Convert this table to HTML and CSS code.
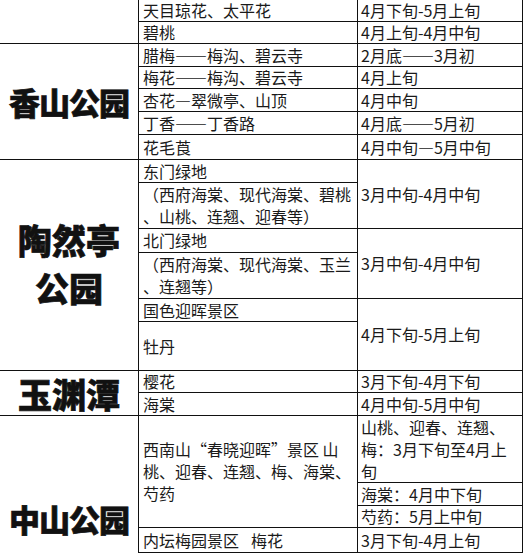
FILE: index.html
```html
<!DOCTYPE html>
<html lang="zh-CN">
<head>
<meta charset="utf-8">
<title>花期表</title>
<link rel="stylesheet" href="styles.css">
</head>
<body>
<div class="sheet">
  <div class="park span2"></div>
  <div class="cell">天目琼花、太平花</div>
  <div class="cell date">4月下旬-5月上旬</div>
  <div class="cell">碧桃</div>
  <div class="cell date">4月上旬-4月中旬</div>

  <div class="park span5 xs">香山公园</div>
  <div class="cell">腊梅——梅沟、碧云寺</div>
  <div class="cell date">2月底——3月初</div>
  <div class="cell">梅花——梅沟、碧云寺</div>
  <div class="cell date">4月上旬</div>
  <div class="cell">杏花—翠微亭、山顶</div>
  <div class="cell date">4月中旬</div>
  <div class="cell">丁香——丁香路</div>
  <div class="cell date">4月底——5月初</div>
  <div class="cell">花毛莨</div>
  <div class="cell date">4月中旬—5月中旬</div>

  <div class="park span6 tr">陶然亭<br>公园</div>
  <div class="cell">东门绿地</div>
  <div class="cell date span2">3月中旬-4月中旬</div>
  <div class="cell multi">（西府海棠、现代海棠、碧桃<br>、山桃、连翘、迎春等）</div>
  <div class="cell">北门绿地</div>
  <div class="cell date span2">3月中旬-4月中旬</div>
  <div class="cell multi">（西府海棠、现代海棠、玉兰<br>、连翘等）</div>
  <div class="cell">国色迎晖景区</div>
  <div class="cell date span2">4月下旬-5月上旬</div>
  <div class="cell">牡丹</div>

  <div class="park span2 yy">玉渊潭</div>
  <div class="cell">樱花</div>
  <div class="cell date">3月下旬-4月下旬</div>
  <div class="cell">海棠</div>
  <div class="cell date">4月中旬-5月中旬</div>

  <div class="park span4 zs last">中山公园</div>
  <div class="cell multi span3">西南山“春晓迎晖”景区 山<br>桃、迎春、连翘、梅、海棠、<br>芍药</div>
  <div class="cell date multi">山桃、迎春、连翘、<br>梅：3月下旬至4月上<br>旬</div>
  <div class="cell date">海棠：4月中下旬</div>
  <div class="cell date">芍药：5月上中旬</div>
  <div class="cell">内坛梅园景区<span class="gap"></span>梅花</div>
  <div class="cell date">3月下旬-4月上旬</div>
</div>
</body>
</html>
```
FILE: styles.css
```css
html, body {
  margin: 0;
  padding: 0;
  background: #ffffff;
}

body {
  width: 525px;
  height: 554px;
  overflow: hidden;
  font-family: "Noto Sans CJK SC", "Noto Sans", sans-serif;
  color: #1a1a1a;
  text-spacing-trim: space-all;
}

.sheet {
  display: grid;
  grid-template-columns: 139px 219px 165px;
  grid-template-rows: 22px 22px 23px 22px 23px 23px 25px 23px 46px 24px 46px 23px 49px 22px 23px 67px 23px 22px 25px;
}

.cell {
  box-sizing: border-box;
  display: flex;
  align-items: center;
  padding: 0 3px 1px 4px;
  font-size: 16px;
  line-height: 22px;
  white-space: nowrap;
  text-spacing-trim: space-all;
  border-right: 1px solid #111;
  border-bottom: 1px solid #111;
}

.cell.date {
  padding-left: 3px;
}

.gap {
  display: inline-block;
  width: 12px;
}

.park {
  box-sizing: border-box;
  display: flex;
  align-items: center;
  justify-content: center;
  text-align: center;
  font-weight: 900;
  color: #111;
  -webkit-text-stroke: 0.7px #111;
  border-right: 1px solid #111;
  border-bottom: 1px solid #111;
}

.park.last {
  border-bottom: none;
}

.span2 { grid-row: span 2; }
.span3 { grid-row: span 3; }
.span4 { grid-row: span 4; }
.span5 { grid-row: span 5; }
.span6 { grid-row: span 6; }

.xs {
  font-size: 31px;
  letter-spacing: -1px;
}

.tr {
  font-size: 34px;
  line-height: 48px;
  padding-bottom: 2px;
}

.yy {
  font-size: 34px;
  padding-top: 1px;
}

.zs {
  font-size: 31px;
  letter-spacing: -1px;
  align-items: flex-end;
  padding-bottom: 12px;
}
```
